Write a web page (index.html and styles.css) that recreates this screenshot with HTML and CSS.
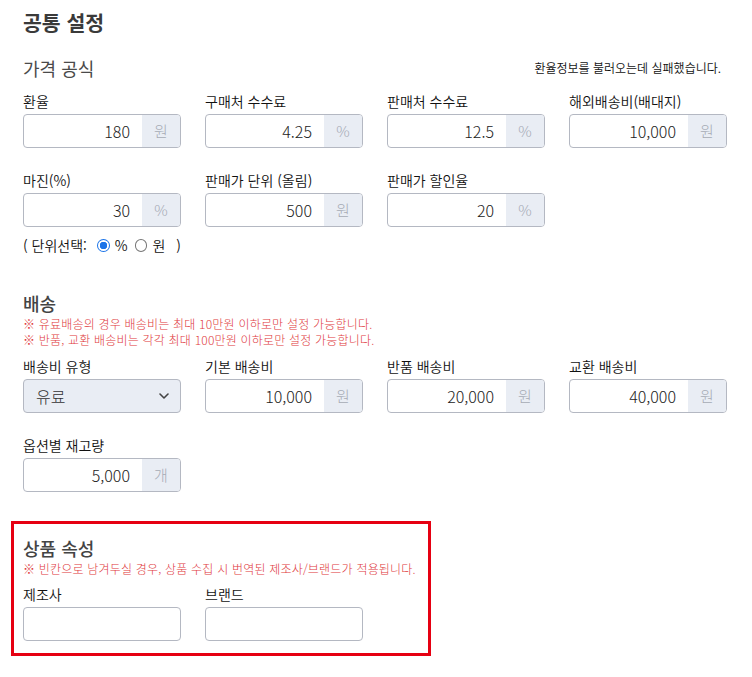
FILE: index.html
```html
<!DOCTYPE html>
<html lang="ko">
<head>
<meta charset="utf-8">
<title>공통 설정</title>
<link rel="stylesheet" href="styles.css">
</head>
<body>
<div class="page">
  <h1 class="title">공통 설정</h1>

  <section class="section">
    <div class="section-head">
      <h2 class="heading">가격 공식</h2>
      <span class="notice">환율정보를 불러오는데 실패했습니다.</span>
    </div>
    <div class="grid">
      <div class="field">
        <label class="label">환율</label>
        <div class="input-group"><span class="value">180</span><span class="addon">원</span></div>
      </div>
      <div class="field">
        <label class="label">구매처 수수료</label>
        <div class="input-group"><span class="value">4.25</span><span class="addon">%</span></div>
      </div>
      <div class="field">
        <label class="label">판매처 수수료</label>
        <div class="input-group"><span class="value">12.5</span><span class="addon">%</span></div>
      </div>
      <div class="field">
        <label class="label">해외배송비(배대지)</label>
        <div class="input-group"><span class="value">10,000</span><span class="addon">원</span></div>
      </div>
      <div class="field">
        <label class="label">마진(%)</label>
        <div class="input-group"><span class="value">30</span><span class="addon">%</span></div>
        <div class="radio-line"><span>( 단위선택:</span><span class="radio checked first"></span><span>%</span><span class="radio"></span><span>원</span><span class="paren">)</span></div>
      </div>
      <div class="field">
        <label class="label">판매가 단위 (올림)</label>
        <div class="input-group"><span class="value">500</span><span class="addon">원</span></div>
      </div>
      <div class="field">
        <label class="label">판매가 할인율</label>
        <div class="input-group"><span class="value">20</span><span class="addon">%</span></div>
      </div>
    </div>
  </section>

  <section class="section shipping">
    <h2 class="heading heading-strong">배송</h2>
    <p class="note">※ 유료배송의 경우 배송비는 최대 10만원 이하로만 설정 가능합니다.</p>
    <p class="note">※ 반품, 교환 배송비는 각각 최대 100만원 이하로만 설정 가능합니다.</p>
    <div class="grid grid-tight">
      <div class="field">
        <label class="label">배송비 유형</label>
        <div class="select"><span>유료</span>
          <svg class="chevron" width="10" height="6" viewBox="0 0 10 6"><path d="M1 1l4 4 4-4" fill="none" stroke="#444" stroke-width="1.6" stroke-linecap="round" stroke-linejoin="round"/></svg>
        </div>
      </div>
      <div class="field">
        <label class="label">기본 배송비</label>
        <div class="input-group"><span class="value">10,000</span><span class="addon">원</span></div>
      </div>
      <div class="field">
        <label class="label">반품 배송비</label>
        <div class="input-group"><span class="value">20,000</span><span class="addon">원</span></div>
      </div>
      <div class="field">
        <label class="label">교환 배송비</label>
        <div class="input-group"><span class="value">40,000</span><span class="addon">원</span></div>
      </div>
      <div class="field">
        <label class="label">옵션별 재고량</label>
        <div class="input-group"><span class="value">5,000</span><span class="addon">개</span></div>
      </div>
    </div>
  </section>

  <section class="attr-box">
    <h2 class="heading heading-strong">상품 속성</h2>
    <p class="note">※ 빈칸으로 남겨두실 경우, 상품 수집 시 번역된 제조사/브랜드가 적용됩니다.</p>
    <div class="grid grid-two">
      <div class="field">
        <label class="label">제조사</label>
        <div class="input-group empty"></div>
      </div>
      <div class="field">
        <label class="label">브랜드</label>
        <div class="input-group empty"></div>
      </div>
    </div>
  </section>
</div>
</body>
</html>
```

FILE: styles.css
```css
* { box-sizing: border-box; }
html, body { margin: 0; padding: 0; background: #fff; }
body {
  font-family: "Noto Sans CJK KR", "Noto Sans", sans-serif;
  color: #222;
}
.page {
  padding: 8px 25px 0 23px;
  width: 752px;
}
.title {
  margin: 0;
  font-size: 20.5px;
  line-height: 28px;
  font-weight: 700;
  color: #3a3a3a;
}
.section { margin-top: 19px; }
.section-head {
  display: flex;
  justify-content: space-between;
  align-items: center;
  padding-right: 6px;
}
.heading {
  margin: 0;
  font-size: 18px;
  line-height: 26px;
  font-weight: 400;
  color: #4a4a4a;
}
.heading-strong { font-weight: 500; color: #444; }
.notice {
  font-size: 12px;
  font-weight: 350;
  color: #111;
  line-height: 16px;
}
.grid {
  display: grid;
  grid-template-columns: repeat(4, 158px);
  column-gap: 24px;
  row-gap: 22px;
  margin-top: 10px;
  align-items: start;
}
.grid-tight { margin-top: 8px; }
.grid-two { grid-template-columns: repeat(2, 158px); margin-top: 7px; }
.field { display: flex; flex-direction: column; }
.label {
  font-size: 14px;
  line-height: 20px;
  font-weight: 350;
  color: #111;
  margin-bottom: 3px;
}
.input-group {
  display: flex;
  height: 34px;
  border: 1px solid #b4b8c2;
  border-radius: 4px;
  overflow: hidden;
  background: #fff;
}
.value {
  flex: 1;
  text-align: right;
  padding-right: 12px;
  font-size: 16px;
  line-height: 32px;
  font-weight: 300;
  color: #222;
}
.addon {
  width: 38px;
  background: #e9edf4;
  color: #a6abb5;
  font-size: 15px;
  line-height: 32px;
  font-weight: 300;
  text-align: center;
}
.radio-line {
  margin-top: 8px;
  font-size: 14px;
  line-height: 20px;
  font-weight: 350;
  color: #111;
  white-space: nowrap;
  display: flex;
  align-items: center;
  gap: 5px;
}
.radio {
  display: inline-block;
  width: 13px;
  height: 13px;
  border-radius: 50%;
  border: 1px solid #767676;
  background: #fff;
  margin-left: 2px;
}
.radio.first { margin-left: 5px; }
.radio.checked {
  border: 1.5px solid #1a73e8;
  background: radial-gradient(circle, #1a73e8 0 3.5px, #fff 4px);
}
.paren { margin-left: 6px; }
.shipping { margin-top: 35px; }
.note {
  margin: 0;
  font-size: 12px;
  line-height: 16px;
  font-weight: 300;
  letter-spacing: 0.2px;
  color: #e0393c;
}
.select {
  height: 34px;
  border: 1px solid #b4b8c2;
  border-radius: 4px;
  background: #e9edf4;
  display: flex;
  align-items: center;
  justify-content: space-between;
  padding: 0 11px 0 12px;
  font-size: 16px;
  font-weight: 300;
  color: #333;
}
.chevron { display: block; }
.attr-box {
  margin: 29px 0 0 -12px;
  width: 420px;
  border: 3px solid #e60012;
  padding: 11px 9px 12px 9px;
}
.input-group.empty { height: 34px; }
```
